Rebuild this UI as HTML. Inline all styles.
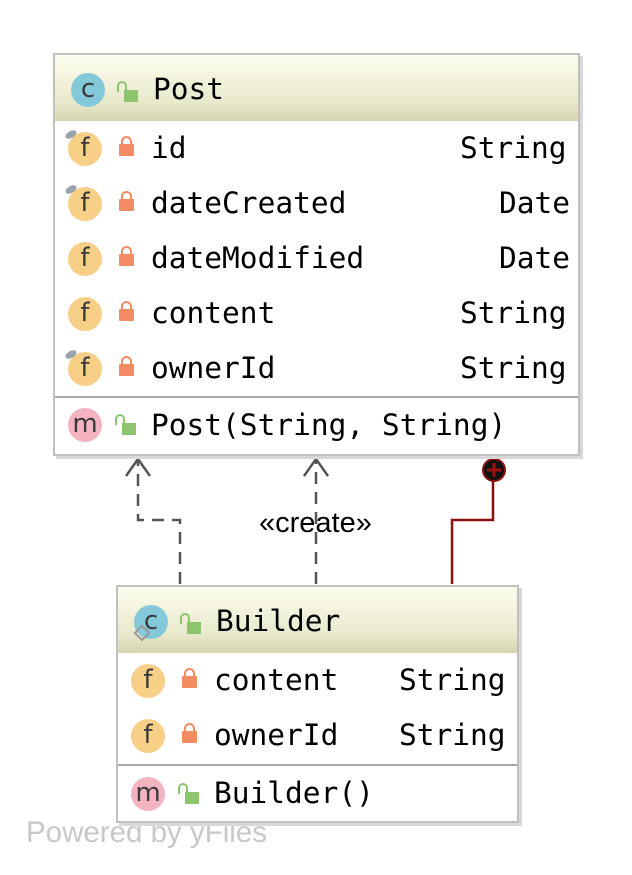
<!DOCTYPE html>
<html><head><style>
body{margin:0;width:632px;height:875px;background:#fff;position:relative;overflow:hidden;font-family:"DejaVu Sans Mono",monospace;}
.box{position:absolute;background:#fff;border:2px solid #c0c0c0;box-shadow:3px 3px 0 #d8d8d8;}
.hdr{position:absolute;left:0;right:0;top:0;background:linear-gradient(#fdfdee,#e9e9cd 70%,#d6d6b0);}
.t{position:absolute;font-size:29.5px;color:#000;line-height:1;white-space:pre;}
.ic{position:absolute;width:34px;height:34px;border-radius:50%;font-family:"DejaVu Sans",sans-serif;font-size:26px;text-align:center;line-height:32px;color:#3a3a3a;}
.c{background:#83c9da}.f{background:#f7cf87}.m{background:#f4b3c0}
.lk{position:absolute;width:15px;height:12px;background:#f38b63;border-radius:1px}
.lk:before{content:"";position:absolute;left:2px;top:-8px;width:7px;height:8px;border:2px solid #f38b63;border-bottom:none;border-radius:6px 6px 0 0}
.ul{position:absolute;width:14px;height:12px;background:#8cc56e}
.ul:before{content:"";position:absolute;left:-7px;top:-9px;width:6px;height:9px;border:2.5px solid #8cc56e;border-bottom:none;border-radius:6px 6px 0 0}
.sep{position:absolute;left:0;right:0;height:2px;background:#a8a8a8}
.pin{position:absolute;width:12px;height:7px;background:#9aa3ab;border-radius:50%;transform:rotate(-30deg)}
.lbl{position:absolute;font-family:"Liberation Sans",sans-serif;white-space:pre;line-height:1}
</style></head><body>
<svg width="632" height="875" style="position:absolute;left:0;top:0">
<g stroke="#555" stroke-width="2.5" fill="none" stroke-dasharray="12,8">
<path d="M180 584 V520 H138 V460"/><path d="M316 584 V460"/>
</g>
<g stroke="#555" stroke-width="2.5" fill="none"><path d="M126 476 L138 459 L150 476"/><path d="M304 476 L316 459 L328 476"/></g>
<path d="M452 584 V520 H493 V480" stroke="#8b1111" stroke-width="2.5" fill="none"/>
<circle cx="494" cy="470" r="11" fill="#111" stroke="#8b1111" stroke-width="2"/>
<path d="M487 470 H501 M494 463 V477" stroke="#a01010" stroke-width="3"/>
</svg>
<div class="lbl" style="left:259px;top:509px;font-size:29px;color:#000">«create»</div>
<div class="lbl" style="left:26px;top:818px;font-size:29.5px;color:#c8c8c8">Powered by yFiles</div>

<div class="box" style="left:53px;top:53px;width:523px;height:399px">
 <div class="hdr" style="height:66px"></div>
 <div class="ic c" style="left:16px;top:18px">c</div><div class="ul" style="left:69px;top:35px"></div>
 <div class="t" style="left:98px;top:20px">Post</div>
 <div class="ic f" style="left:13px;top:77px">f</div><div class="pin" style="left:10px;top:76px"></div><div class="lk" style="left:64px;top:89px"></div><div class="t" style="left:96px;top:79px">id</div><div class="t" style="left:405px;top:79px">String</div>
 <div class="ic f" style="left:13px;top:132px">f</div><div class="pin" style="left:10px;top:131px"></div><div class="lk" style="left:64px;top:144px"></div><div class="t" style="left:96px;top:134px">dateCreated</div><div class="t" style="left:444px;top:134px">Date</div>
 <div class="ic f" style="left:13px;top:187px">f</div><div class="lk" style="left:64px;top:199px"></div><div class="t" style="left:96px;top:189px">dateModified</div><div class="t" style="left:444px;top:189px">Date</div>
 <div class="ic f" style="left:13px;top:242px">f</div><div class="lk" style="left:64px;top:254px"></div><div class="t" style="left:96px;top:244px">content</div><div class="t" style="left:405px;top:244px">String</div>
 <div class="ic f" style="left:13px;top:297px">f</div><div class="pin" style="left:10px;top:296px"></div><div class="lk" style="left:64px;top:309px"></div><div class="t" style="left:96px;top:299px">ownerId</div><div class="t" style="left:405px;top:299px">String</div>
 <div class="sep" style="top:341px"></div>
 <div class="ic m" style="left:13px;top:353px">m</div><div class="ul" style="left:67px;top:368px"></div><div class="t" style="left:96px;top:356px">Post(String, String)</div>
</div>

<div class="box" style="left:116px;top:585px;width:399px;height:234px">
 <div class="hdr" style="height:66px"></div>
 <div class="ic c" style="left:16px;top:18px">c</div><div class="ul" style="left:69px;top:35px"></div>
 <div style="position:absolute;left:18px;top:40px;width:8px;height:8px;border:2px solid #999;transform:rotate(45deg)"></div>
 <div class="t" style="left:98px;top:20px">Builder</div>
 <div class="ic f" style="left:13px;top:77px">f</div><div class="lk" style="left:64px;top:89px"></div><div class="t" style="left:96px;top:79px">content</div><div class="t" style="left:281px;top:79px">String</div>
 <div class="ic f" style="left:13px;top:132px">f</div><div class="lk" style="left:64px;top:144px"></div><div class="t" style="left:96px;top:134px">ownerId</div><div class="t" style="left:281px;top:134px">String</div>
 <div class="sep" style="top:177px"></div>
 <div class="ic m" style="left:13px;top:190px">m</div><div class="ul" style="left:67px;top:205px"></div><div class="t" style="left:96px;top:192px">Builder()</div>
</div>
</body></html>
